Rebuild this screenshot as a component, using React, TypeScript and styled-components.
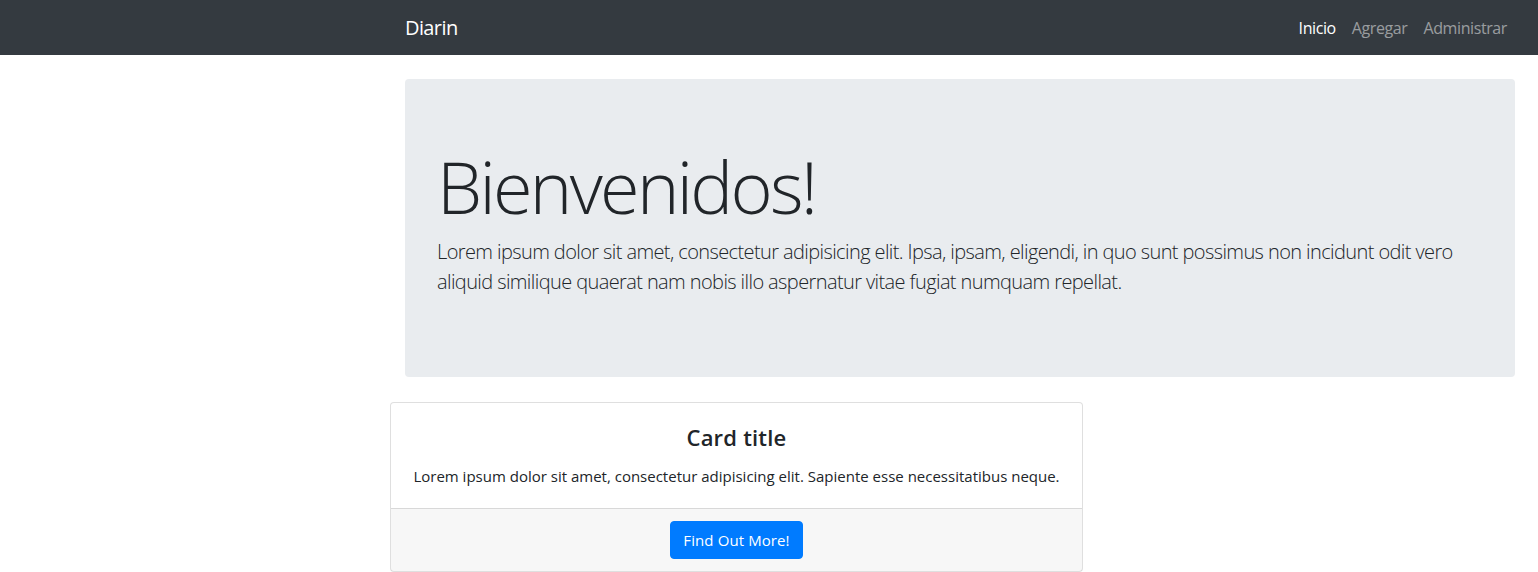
import React from "react";
import styled, { createGlobalStyle } from "styled-components";

const Global = createGlobalStyle`
  html, body { margin: 0; padding: 0; background: #fff; }
  body {
    font-family: "Open Sans", "Noto Sans", sans-serif;
    font-size: 16px;
    line-height: 1.5;
    color: #212529;
  }
  * { box-sizing: border-box; }
`;

const Navbar = styled.nav`
  display: flex;
  align-items: center;
  height: 55px;
  padding: 8px 23px 8px 405px;
  background: #343a40;
`;

const Brand = styled.a`
  font-size: 20px;
  line-height: 30px;
  padding: 5px 0;
  color: #fff;
  text-decoration: none;
  letter-spacing: -0.6px;
`;

const NavList = styled.ul`
  display: flex;
  list-style: none;
  margin: 0 0 0 auto;
  padding: 0;
`;

const NavLink = styled.a<{ $active?: boolean }>`
  display: block;
  padding: 8px;
  font-size: 16px;
  line-height: 24px;
  letter-spacing: -0.4px;
  color: ${(p) => (p.$active ? "#fff" : "rgba(255,255,255,.5)")};
  text-decoration: none;
`;

const Main = styled.main`
  padding: 24px 23px 0 405px;
`;

const Jumbotron = styled.section`
  width: 1110px;
  padding: 64px 32px;
  background: #e9ecef;
  border-radius: 4px;
  margin-bottom: 25px;
`;

const Display = styled.h1`
  margin: 0 0 8px;
  font-size: 72px;
  font-weight: 300;
  line-height: 86.4px;
  letter-spacing: -2.7px;
`;

const Lead = styled.p`
  margin: 0 0 16px;
  font-size: 20px;
  font-weight: 300;
  line-height: 30px;
  letter-spacing: -0.6px;
`;

const Card = styled.div`
  margin-left: -15px;
  width: 693px;
  border: 1px solid rgba(0, 0, 0, 0.125);
  border-radius: 4px;
  text-align: center;
  background: #fff;
`;

const CardBody = styled.div`
  padding: 20px;
`;

const CardTitle = styled.h4`
  margin: 0 0 12px;
  font-size: 22px;
  font-weight: 600;
  line-height: 28.8px;
  letter-spacing: 0.2px;
`;

const CardText = styled.p`
  margin: 0;
  font-size: 15px;
  line-height: 24px;
  letter-spacing: 0;
`;

const CardFooter = styled.div`
  padding: 12px 20px;
  background: rgba(0, 0, 0, 0.03);
  border-top: 1px solid rgba(0, 0, 0, 0.125);
`;

const Button = styled.a`
  display: inline-block;
  padding: 6px 12px;
  font-size: 15px;
  line-height: 24px;
  letter-spacing: 0.1px;
  color: #fff;
  background: #007bff;
  border: 1px solid #007bff;
  border-radius: 4px;
  text-decoration: none;
`;

export default function App() {
  return (
    <>
      <Global />
      <Navbar>
        <Brand href="#">Diarin</Brand>
        <NavList>
          <li><NavLink href="#" $active>Inicio</NavLink></li>
          <li><NavLink href="#">Agregar</NavLink></li>
          <li><NavLink href="#">Administrar</NavLink></li>
        </NavList>
      </Navbar>
      <Main>
        <Jumbotron>
          <Display>Bienvenidos!</Display>
          <Lead>
            Lorem ipsum dolor sit amet, consectetur adipisicing elit. Ipsa, ipsam, eligendi, in quo sunt possimus non incidunt odit vero
            <br />
            aliquid similique quaerat nam nobis illo aspernatur vitae fugiat numquam repellat.
          </Lead>
        </Jumbotron>
        <Card>
          <CardBody>
            <CardTitle>Card title</CardTitle>
            <CardText>Lorem ipsum dolor sit amet, consectetur adipisicing elit. Sapiente esse necessitatibus neque.</CardText>
          </CardBody>
          <CardFooter>
            <Button href="#">Find Out More!</Button>
          </CardFooter>
        </Card>
      </Main>
    </>
  );
}
